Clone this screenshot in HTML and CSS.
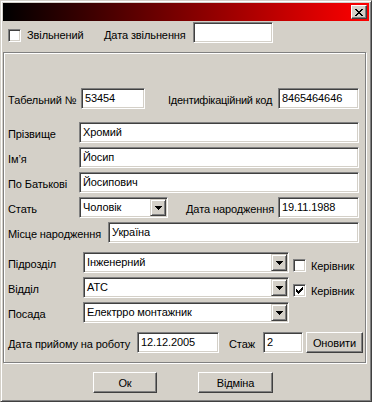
FILE: index.html
```html
<!DOCTYPE html>
<html lang="uk">

<head>
    <meta charset="UTF-8">
    <title>Працівник</title>
    <link rel="stylesheet" href="styles.css">
</head>

<body>
    <div class="window">
        <div class="titlebar">
            <div class="close">
                <svg width="8" height="7" viewBox="0 0 8 7">
                    <path d="M0 0h2v1H0zM6 0h2v1H6zM1 1h2v1H1zM5 1h2v1H5zM2 2h4v1H2zM3 3h2v1H3zM2 4h4v1H2zM1 5h2v1H1zM5 5h2v1H5zM0 6h2v1H0zM6 6h2v1H6z" />
                </svg>
            </div>
        </div>

        <div class="top">
            <span class="check"></span>
            <span class="lbl-fired">Звільнений</span>
            <span class="lbl-firedate">Дата звільнення</span>
            <div class="edit w-firedate"></div>
        </div>

        <div class="group">
            <div class="row">
                <span class="lbl w-tab">Табельний №</span>
                <div class="edit w-tabin">53454</div>
                <span class="lbl w-ident">Ідентифікаційний код</span>
                <div class="edit w-short">8465464646</div>
            </div>
            <div class="row row-gap13">
                <span class="lbl w-name">Прізвище</span>
                <div class="edit w-long">Хромий</div>
            </div>
            <div class="row">
                <span class="lbl w-name">Ім’я</span>
                <div class="edit w-long">Йосип</div>
            </div>
            <div class="row">
                <span class="lbl w-name">По Батькові</span>
                <div class="edit w-long">Йосипович</div>
            </div>
            <div class="row">
                <span class="lbl w-name">Стать</span>
                <div class="combo w-sex">
                    <span class="combo-text">Чоловік</span>
                    <span class="drop"><svg width="7" height="4" viewBox="0 0 7 4"><path d="M0 0h7v1H0zM1 1h5v1H1zM2 2h3v1H2zM3 3h1v1H3z" /></svg></span>
                </div>
                <span class="lbl w-birth">Дата народження</span>
                <div class="edit w-short">19.11.1988</div>
            </div>
            <div class="row">
                <span class="lbl w-place">Місце народження</span>
                <div class="edit w-placein">Україна</div>
            </div>
            <div class="row row-gap9">
                <span class="lbl w-dept">Підрозділ</span>
                <div class="combo w-deptin">
                    <span class="combo-text">Інженерний</span>
                    <span class="drop"><svg width="7" height="4" viewBox="0 0 7 4"><path d="M0 0h7v1H0zM1 1h5v1H1zM2 2h3v1H2zM3 3h1v1H3z" /></svg></span>
                </div>
                <div class="boss">
                    <span class="check"></span>
                    <span>Керівник</span>
                </div>
            </div>
            <div class="row">
                <span class="lbl w-dept">Відділ</span>
                <div class="combo w-deptin">
                    <span class="combo-text">АТС</span>
                    <span class="drop"><svg width="7" height="4" viewBox="0 0 7 4"><path d="M0 0h7v1H0zM1 1h5v1H1zM2 2h3v1H2zM3 3h1v1H3z" /></svg></span>
                </div>
                <div class="boss">
                    <span class="check">
                        <svg width="7" height="7" viewBox="0 0 7 7"><path d="M6 0h1v1H6zM5 1h2v1H5zM0 2h1v1H0zM4 2h3v1H4zM0 3h2v1H0zM3 3h3v1H3zM0 4h5v1H0zM1 5h3v1H1zM2 6h1v1H2z" /></svg>
                    </span>
                    <span>Керівник</span>
                </div>
            </div>
            <div class="row">
                <span class="lbl w-dept">Посада</span>
                <div class="combo w-deptin">
                    <span class="combo-text">Електрро монтажник</span>
                    <span class="drop"><svg width="7" height="4" viewBox="0 0 7 4"><path d="M0 0h7v1H0zM1 1h5v1H1zM2 2h3v1H2zM3 3h1v1H3z" /></svg></span>
                </div>
            </div>
            <div class="row row-gap9">
                <span class="lbl w-hire">Дата прийому на роботу</span>
                <div class="edit w-hirein">12.12.2005</div>
                <span class="lbl w-exp">Стаж</span>
                <div class="edit w-expin">2</div>
                <div class="btn w-refresh">Оновити</div>
            </div>
        </div>

        <div class="buttons">
            <div class="btn btn-ok">Ок</div>
            <div class="btn btn-cancel">Відміна</div>
        </div>
    </div>
</body>

</html>
```

FILE: styles.css
```css
* {
    box-sizing: border-box;
}

body {
    margin: 0;
    background: #D4D0C8;
    font-family: "Liberation Sans", Arial, sans-serif;
    font-size: 11px;
    letter-spacing: -0.1px;
    color: #000;
}

/* окно */
.window {
    width: 372px;
    height: 402px;
    padding: 2px;
    background: #D4D0C8;
    border: 1px solid;
    border-color: #D4D0C8 #404040 #404040 #D4D0C8;
    box-shadow: inset 1px 1px #fff, inset -1px -1px #808080;
}

.titlebar {
    height: 18px;
    display: flex;
    justify-content: flex-end;
    align-items: center;
    padding-right: 2px;
    background: linear-gradient(to right, #000, #f00);
}

.close {
    width: 16px;
    height: 14px;
    display: flex;
    justify-content: center;
    align-items: center;
    background: #D4D0C8;
    border: 1px solid;
    border-color: #fff #404040 #404040 #fff;
    box-shadow: inset -1px -1px #808080;
}

svg {
    display: block;
    shape-rendering: crispEdges;
}

/* верхний ряд */
.top {
    display: flex;
    align-items: flex-start;
    height: 21px;
    margin-top: 1px;
}

.top .check {
    margin: 7px 0 0 5px;
}

.lbl-fired,
.lbl-firedate {
    margin-top: 7px;
    line-height: 13px;
    white-space: nowrap;
}

.lbl-fired {
    width: 77px;
    margin-left: 6px;
}

.lbl-firedate {
    width: 89px;
}

.w-firedate {
    width: 80px;
}

/* рамка */
.group {
    width: 363px;
    height: 311px;
    margin-top: 9px;
    padding: 35px 0 0 4px;
    border: 1px solid #808080;
    box-shadow: inset 1px 1px #fff, 1px 1px #fff;
}

.row {
    display: flex;
    align-items: center;
    height: 21px;
    margin-top: 4px;
}

.row:first-child {
    margin-top: 0;
}

.row-gap13 {
    margin-top: 13px;
}

.row-gap9 {
    margin-top: 9px;
}

.lbl {
    white-space: nowrap;
    padding-top: 2px;
}

.edit,
.combo {
    height: 21px;
    background: #fff;
    border: 1px solid;
    border-color: #808080 #fff #fff #808080;
    box-shadow: inset 1px 1px #404040, inset -1px -1px #D4D0C8;
    white-space: nowrap;
    overflow: hidden;
}

.edit {
    padding: 1px 3px 0;
    line-height: 17px;
}

.combo {
    display: flex;
    padding: 1px;
}

.combo-text {
    flex: 1;
    padding-left: 2px;
    line-height: 17px;
}

.drop {
    width: 16px;
    height: 17px;
    display: flex;
    justify-content: center;
    align-items: center;
    background: #D4D0C8;
    border: 1px solid;
    border-color: #D4D0C8 #404040 #404040 #D4D0C8;
    box-shadow: inset 1px 1px #fff, inset -1px -1px #808080;
}

.check {
    width: 13px;
    height: 13px;
    display: flex;
    justify-content: center;
    align-items: center;
    background: #fff;
    border: 1px solid;
    border-color: #808080 #fff #fff #808080;
    box-shadow: inset 1px 1px #404040, inset -1px -1px #D4D0C8;
}

.boss {
    display: flex;
    align-items: center;
    align-self: flex-end;
    margin: 0 0 1px 4px;
    gap: 5px;
}

/* ширины */
.w-tab {
    width: 73px;
}

.w-tabin {
    width: 64px;
}

.w-ident {
    width: 110px;
    margin-left: 23px;
    letter-spacing: -0.25px;
}

.w-short {
    width: 81px;
}

.w-name {
    width: 71px;
}

.w-long {
    width: 280px;
}

.w-sex {
    width: 89px;
}

.w-birth {
    width: 92px;
    margin-left: 18px;
}

.w-place {
    width: 100px;
}

.w-placein {
    width: 251px;
}

.w-dept {
    width: 75px;
}

.w-deptin {
    width: 206px;
}

.w-hire {
    width: 129px;
}

.w-hirein {
    width: 82px;
}

.w-exp {
    width: 34px;
    margin-left: 10px;
}

.w-expin {
    width: 40px;
}

/* кнопки */
.btn {
    height: 21px;
    display: flex;
    justify-content: center;
    align-items: center;
    background: #D4D0C8;
    border: 1px solid;
    border-color: #fff #404040 #404040 #fff;
    box-shadow: inset -1px -1px #808080;
}

.w-refresh {
    width: 57px;
    margin-left: 3px;
}

.buttons {
    display: flex;
    margin-top: 9px;
}

.btn-ok {
    width: 64px;
    margin-left: 90px;
}

.btn-cancel {
    width: 75px;
    margin-left: 41px;
}
```
